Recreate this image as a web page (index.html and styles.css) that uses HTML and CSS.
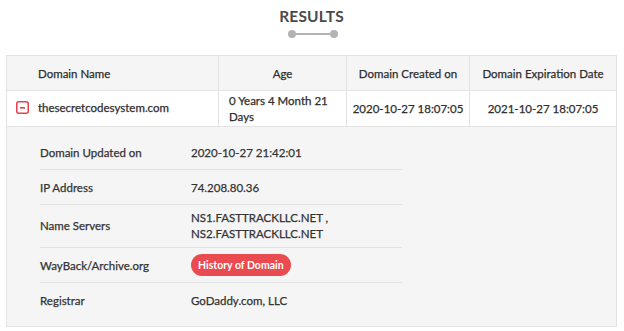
FILE: index.html
```html
<!DOCTYPE html>
<html lang="en">
<head>
    <meta charset="UTF-8">
    <meta name="viewport" content="width=device-width, initial-scale=1.0">
    <title>Results</title>
<link rel="stylesheet" href="styles.css">
</head>
<body>

<div id="wrapper">

<div class="heading">
    <h3>RESULTS</h3>
    <div class="divider"><span></span><i></i><span></span></div>
</div>

<table class="results">
    <thead>
        <tr>
            <th class="col-name">Domain Name</th>
            <th class="col-age">Age</th>
            <th class="col-created">Domain Created on</th>
            <th class="col-expire">Domain Expiration Date</th>
        </tr>
    </thead>
    <tbody>
        <tr class="main-row">
            <td class="domain">
                <span class="toggle"><svg width="13" height="13" viewBox="0 0 13 13"><rect x="0.75" y="0.75" width="11.5" height="11.5" rx="2" fill="#fff" stroke="#e8414d" stroke-width="1.5"/><rect x="4" y="6" width="5" height="1.6" fill="#e8414d"/></svg></span>
                thesecretcodesystem.com
            </td>
            <td class="age">0 Years 4 Month 21 Days</td>
            <td class="date">2020-10-27 18:07:05</td>
            <td class="date">2021-10-27 18:07:05</td>
        </tr>
        <tr class="detail-row">
            <td colspan="4">
                <table class="details">
                    <tr>
                        <td class="label">Domain Updated on</td>
                        <td>2020-10-27 21:42:01</td>
                    </tr>
                    <tr>
                        <td class="label">IP Address</td>
                        <td>74.208.80.36</td>
                    </tr>
                    <tr class="tall">
                        <td class="label">Name Servers</td>
                        <td>NS1.FASTTRACKLLC.NET ,<br>NS2.FASTTRACKLLC.NET</td>
                    </tr>
                    <tr>
                        <td class="label">WayBack/Archive.org</td>
                        <td><a class="badge" href="#">History of Domain</a></td>
                    </tr>
                    <tr>
                        <td class="label">Registrar</td>
                        <td>GoDaddy.com, LLC</td>
                    </tr>
                </table>
            </td>
        </tr>
    </tbody>
</table>

</div>

</body>
</html>
```

FILE: styles.css
```css
body {
    margin: 0;
    background-color: #FFF;
}
#wrapper {
    padding: 0 7px 0 6px;
    font-family: "Lato", "Open Sans", sans-serif;
    font-size: 11.5px;
    color: #333;
    -webkit-text-stroke: 0.25px;
}
.heading {
    display: flex;
    flex-direction: column;
    align-items: center;
    padding-top: 6px;
    height: 55px;
    box-sizing: border-box;
}
.heading h3 {
    margin: 0;
    font-size: 15.5px;
    line-height: 20px;
    font-weight: bold;
    color: #4A4A4A;
    letter-spacing: 0.2px;
    -webkit-text-stroke: 0;
}
.divider {
    display: flex;
    align-items: center;
    margin-top: 4px;
    margin-left: 2px;
}
.divider span {
    width: 8px;
    height: 8px;
    border-radius: 50%;
    background-color: #B3B3B3;
}
.divider i {
    width: 34px;
    height: 2px;
    background-color: #B3B3B3;
}
.results {
    width: 100%;
    border-collapse: collapse;
    border: 1px solid #E3E3E3;
}
.results th {
    height: 34px;
    padding: 0;
    background-color: #F5F5F5;
    border: 1px solid #E3E3E3;
    font-weight: normal;
    color: #2E2E2E;
    text-align: center;
}
.results th.col-name {
    width: 180px;
    text-align: left;
    padding-left: 31px;
}
.results th.col-age {
    width: 127px;
}
.results th.col-created {
    width: 122px;
}
.main-row td {
    height: 35px;
    padding: 0;
    border: 1px solid #E3E3E3;
    color: #2E2E2E;
}
.main-row td.domain {
    padding-left: 9px;
}
.toggle {
    display: inline-block;
    vertical-align: -2px;
    margin-right: 6px;
}
.main-row td.age {
    padding: 0 8px 0 10px;
    line-height: 16px;
}
.main-row td.date {
    text-align: center;
}
.detail-row > td {
    padding: 8px 0 9px 33px;
    background-color: #F5F5F5;
    border: 1px solid #E3E3E3;
}
.details {
    width: 362px;
    border-collapse: collapse;
}
.details td {
    padding: 0;
    height: 34px;
    border-bottom: 1px solid #E2E2E2;
    color: #333;
}
.details tr:last-child td {
    border-bottom: none;
}
.details td.label {
    width: 151px;
}
.details tr.tall td {
    height: 42px;
    line-height: 16px;
}
.badge {
    display: inline-block;
    padding: 0 7px;
    height: 22px;
    line-height: 22px;
    border-radius: 11px;
    background-color: #E94B50;
    color: #FFF;
    font-weight: bold;
    font-size: 10.5px;
    text-decoration: none;
    -webkit-text-stroke: 0;
}
```
